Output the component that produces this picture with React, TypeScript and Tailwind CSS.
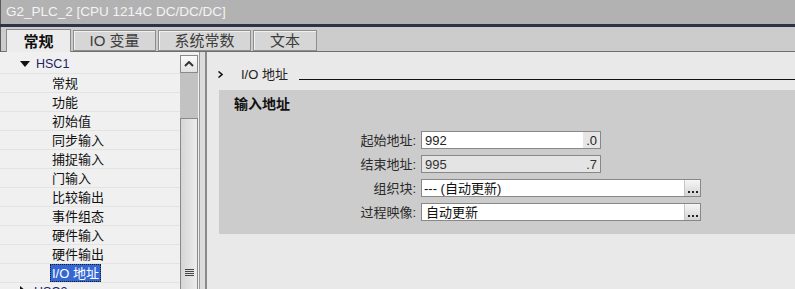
const treeItems = [
    "常规",
    "功能",
    "初始值",
    "同步输入",
    "捕捉输入",
    "门输入",
    "比较输出",
    "事件组态",
    "硬件输入",
    "硬件输出",
];

const Tab = ({ label, active, width }: { label: string; active?: boolean; width: string }) => {
    if (active) {
        return (
            <div
                className={`${width} h-[23px] -mb-px relative z-10 bg-[#ececec] border border-b-0 border-[#8a8a8a] flex items-center justify-center text-[15px] font-bold text-[#111]`}
            >
                {label}
            </div>
        );
    }
    return (
        <div
            className={`${width} h-[21px] bg-[#d6d6d6] border border-[#8e8e8e] shadow-[inset_1px_1px_0_#f2f2f2] flex items-center justify-center text-[15px] text-[#3c3c3c]`}
        >
            {label}
        </div>
    );
};

const FieldBox = ({ children, width, bg }: { children: React.ReactNode; width: string; bg: string }) => (
    <div className={`${width} h-[18px] ${bg} border border-[#888] flex items-stretch`}>{children}</div>
);

const DotsButton = () => (
    <div className="w-[16px] bg-gradient-to-b from-[#f6f6f6] to-[#d4d4d4] border-l border-[#c4c4c4] flex items-end justify-center pb-[3px]">
        <div className="flex gap-[2px]">
            <span className="w-[2px] h-[2px] bg-[#222]" />
            <span className="w-[2px] h-[2px] bg-[#222]" />
            <span className="w-[2px] h-[2px] bg-[#222]" />
        </div>
    </div>
);

const FormRow = ({ label, children }: { label: string; children: React.ReactNode }) => (
    <div className="flex items-center h-[18px]">
        <div className="w-[199px] pr-[2px] text-right text-[13px] text-[#2a2a2a]">{label}</div>
        <div className="ml-[3px]">{children}</div>
    </div>
);

export default function App() {
    return (
        <div className="w-[795px] h-[289px] overflow-hidden flex flex-col font-['Liberation_Sans','Noto_Sans_CJK_SC',sans-serif] leading-none">
            {/* title */}
            <div className="h-[24px] shrink-0 bg-[#b2b2b2] border-l border-[#5a5a5a] flex items-center pl-[5px] text-[13.5px] text-[#f4f4f4]">
                G2_PLC_2 [CPU 1214C DC/DC/DC]
            </div>
            <div className="h-[3px] shrink-0 bg-[#2e3447]" />

            {/* tabs */}
            <div className="h-[25px] shrink-0 bg-[#cccccc] border-l border-[#5a5a5a] border-b border-b-[#6f6f6f] flex items-end pl-[5px] gap-[2px]">
                <Tab label="常规" active width="w-[65px]" />
                <Tab label="IO 变量" width="w-[83px]" />
                <Tab label="系统常数" width="w-[93px]" />
                <Tab label="文本" width="w-[64px]" />
            </div>

            {/* body */}
            <div className="flex-1 flex min-h-0">
                {/* tree */}
                <div className="w-[180px] bg-[#f0f0f0] pt-[3px] text-[13px] text-[#111]">
                    <div className="h-[19px] border-b border-[#e3e3e3] flex items-center pl-[20px] text-[#1d2460] text-[12.5px]">
                        <svg width="10" height="6" viewBox="0 0 10 6" className="mr-[6px]">
                            <polygon points="0,0 10,0 5,6" fill="#111" />
                        </svg>
                        HSC1
                    </div>
                    {treeItems.map((t) => (
                        <div key={t} className="h-[19px] border-b border-[#e3e3e3] flex items-center pl-[52px]">
                            {t}
                        </div>
                    ))}
                    <div className="h-[19px] border-b border-[#e3e3e3] flex items-center pl-[50px]">
                        <span className="h-[18px] px-[2px] flex items-center bg-[#3467d3] text-white outline-1 outline-dotted outline-[#1a1a1a] -outline-offset-1">
                            I/O 地址
                        </span>
                    </div>
                    <div className="h-[19px] flex items-start pt-[3px] pl-[20px] text-[#1d2460] text-[12.5px]">
                        <svg width="6" height="10" viewBox="0 0 6 10" className="mr-[8px]">
                            <polygon points="0,0 6,5 0,10" fill="#111" />
                        </svg>
                        HSC2
                    </div>
                </div>

                {/* scrollbar */}
                <div className="w-[18px] pt-[3px] bg-[#f0f0f0] flex flex-col">
                    <div className="h-[18px] border border-[#8a8a8a] bg-gradient-to-b from-[#fafafa] to-[#e2e2e2] flex items-center justify-center">
                        <svg width="10" height="6" viewBox="0 0 10 6">
                            <polyline points="1,5 5,1 9,5" fill="none" stroke="#333" strokeWidth="2" />
                        </svg>
                    </div>
                    <div className="h-[45px] bg-[#c2c2c2]" />
                    <div className="flex-1 border-x border-t border-[#8a8a8a] bg-gradient-to-r from-[#d6d6d6] to-[#ececec] flex flex-col items-center justify-end pb-[13px]">
                        <div className="flex flex-col gap-[1px]">
                            <span className="w-[9px] h-px bg-[#444]" />
                            <span className="w-[9px] h-px bg-[#444]" />
                            <span className="w-[9px] h-px bg-[#444]" />
                            <span className="w-[9px] h-px bg-[#444]" />
                        </div>
                    </div>
                </div>

                {/* splitter */}
                <div className="w-[9px] bg-[#f0f0f0] pl-px">
                    <div className="h-full border-l border-[#9a9a9a] border-r-2 border-r-[#8a8a8a] bg-[#dcdcdc]" />
                </div>

                {/* content */}
                <div className="flex-1 bg-[#e9e9e9] flex flex-col">
                    <div className="h-[18px] mt-[13px] flex items-center">
                        <svg width="5" height="7" viewBox="0 0 5 7" className="ml-[11px]">
                            <polyline points="0.5,0.5 4,3.5 0.5,6.5" fill="none" stroke="#111" strokeWidth="1.5" />
                        </svg>
                        <span className="ml-[18px] text-[13px] text-[#222]">I/O 地址</span>
                        <div className="flex-1 ml-[11px] mt-[10px] h-px bg-[#111]" />
                    </div>

                    <div className="ml-[12px] mt-[7px] h-[144px] bg-[#cccccc] flex flex-col">
                        <div className="pl-[15px] pt-[7px] text-[14px] font-bold text-[#111]">输入地址</div>
                        <div className="mt-[20px] flex flex-col gap-[6px]">
                            <FormRow label="起始地址:">
                                <FieldBox width="w-[180px]" bg="bg-white">
                                    <span className="flex-1 pl-[3px] flex items-center text-[13px] text-[#222]">992</span>
                                    <span className="w-[17px] bg-[#e6e6e6] flex items-center justify-end pr-[3px] text-[13px] text-[#222]">.0</span>
                                </FieldBox>
                            </FormRow>
                            <FormRow label="结束地址:">
                                <FieldBox width="w-[180px]" bg="bg-[#e4e4e4]">
                                    <span className="flex-1 pl-[3px] flex items-center text-[13px] text-[#333]">995</span>
                                    <span className="w-[17px] flex items-center justify-end pr-[3px] text-[13px] text-[#333]">.7</span>
                                </FieldBox>
                            </FormRow>
                            <FormRow label="组织块:">
                                <FieldBox width="w-[280px]" bg="bg-white">
                                    <span className="flex-1 pl-[2px] flex items-center text-[13px] text-[#111]">--- (自动更新)</span>
                                    <DotsButton />
                                </FieldBox>
                            </FormRow>
                            <FormRow label="过程映像:">
                                <FieldBox width="w-[280px]" bg="bg-white">
                                    <span className="flex-1 pl-[4px] flex items-center text-[13px] text-[#111]">自动更新</span>
                                    <DotsButton />
                                </FieldBox>
                            </FormRow>
                        </div>
                    </div>
                </div>
            </div>
        </div>
    );
}
